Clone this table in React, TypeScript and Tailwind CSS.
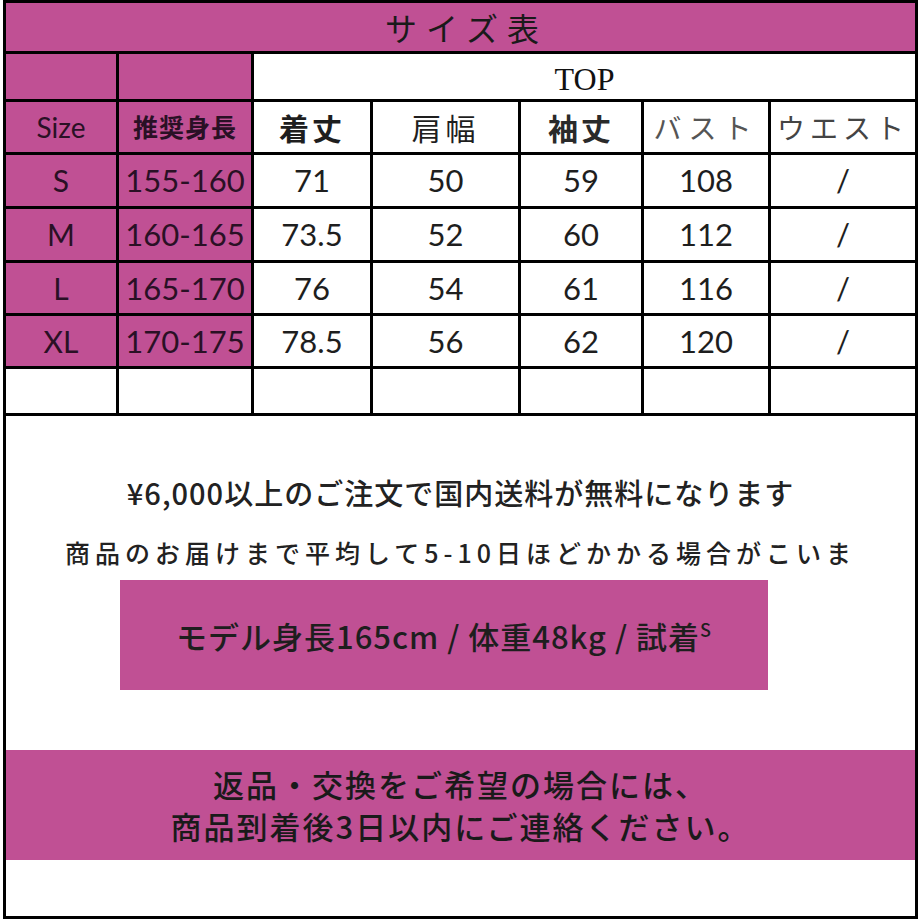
import React from 'react';

const pink = 'bg-[#c05094]';
const num = "font-['Lato','Noto_Sans_CJK_JP',sans-serif] text-[31px] text-[#1e1e1e]";
const jp = "font-['Noto_Sans_CJK_JP',sans-serif]";

const rows = [
  { size: 'S', h: '155-160', v: ['71', '50', '59', '108'], rowH: 'h-[54px]' },
  { size: 'M', h: '160-165', v: ['73.5', '52', '60', '112'], rowH: 'h-[54px]' },
  { size: 'L', h: '165-170', v: ['76', '54', '61', '116'], rowH: 'h-[53px]' },
  { size: 'XL', h: '170-175', v: ['78.5', '56', '62', '120'], rowH: 'h-[53px]' },
];

function Cell({ children, className = '', last = false }: { children?: React.ReactNode; className?: string; last?: boolean }) {
  return (
    <div className={`flex items-center justify-center border-b-[3px] border-black ${last ? '' : 'border-r-[3px]'} ${className}`}>
      {children}
    </div>
  );
}

export default function App() {
  return (
    <div className="w-[920px] h-[920px] bg-white">
      <div className="ml-[3px] w-[915px] h-[919px] border-[3px] border-black flex flex-col">
        {/* title */}
        <div className={`h-[51px] shrink-0 ${pink} border-b-[3px] border-black flex items-center justify-center`}>
          <span className={`${jp} text-[32px] tracking-[9px] pl-[12px] text-[#1a1a1a] leading-none`}>サイズ表</span>
        </div>

        {/* table */}
        <div className="grid grid-cols-[113px_135px_119px_148px_123px_127px_1fr]">
          <Cell className={`h-[48px] ${pink}`} />
          <Cell className={`h-[48px] ${pink}`} />
          <Cell last className="h-[48px] col-span-5">
            <span className="font-['Liberation_Serif',serif] text-[32px] text-[#111] leading-none pt-1">TOP</span>
          </Cell>

          <Cell className={`h-[53px] ${pink}`}>
            <span className="font-['Lato',sans-serif] text-[28px] text-[#2a1025]">Size</span>
          </Cell>
          <Cell className={`h-[53px] ${pink}`}>
            <span className={`${jp} text-[25px] font-bold tracking-[1px] text-[#2a1025]`}>推奨身長</span>
          </Cell>
          <Cell className="h-[53px]">
            <span className={`${jp} text-[30px] font-semibold tracking-[3px] text-[#1e1e1e]`}>着丈</span>
          </Cell>
          <Cell className="h-[53px]">
            <span className={`${jp} text-[30px] tracking-[4px] text-[#1e1e1e]`}>肩幅</span>
          </Cell>
          <Cell className="h-[53px]">
            <span className={`${jp} text-[30px] font-semibold tracking-[3px] text-[#2a2a2a]`}>袖丈</span>
          </Cell>
          <Cell className="h-[53px]">
            <span className={`${jp} text-[28px] tracking-[7px] text-[#555]`}>バスト</span>
          </Cell>
          <Cell last className="h-[53px]">
            <span className={`${jp} text-[28px] tracking-[5px] text-[#444]`}>ウエスト</span>
          </Cell>

          {rows.map((r) => (
            <React.Fragment key={r.size}>
              <Cell className={`${r.rowH} ${pink}`}>
                <span className="font-['Lato',sans-serif] text-[30px] text-[#2a1025]">{r.size}</span>
              </Cell>
              <Cell className={`${r.rowH} ${pink}`}>
                <span className="font-['Lato',sans-serif] text-[31px] text-[#2a1025]">{r.h}</span>
              </Cell>
              {r.v.map((v, i) => (
                <Cell key={i} className={r.rowH}>
                  <span className={num}>{v}</span>
                </Cell>
              ))}
              <Cell last className={r.rowH}>
                <span className={num}>/</span>
              </Cell>
            </React.Fragment>
          ))}

          {[0, 1, 2, 3, 4, 5, 6].map((i) => (
            <Cell key={i} last={i === 6} className="h-[47px]" />
          ))}
        </div>

        {/* notes */}
        <div className="h-[334px] shrink-0 flex flex-col">
          <div className={`mt-[56px] h-[40px] flex items-center justify-center ${jp} text-[29px] font-medium tracking-[1px] text-[#222] leading-none`}>
            ¥6,000以上のご注文で国内送料が無料になります
          </div>
          <div className={`mt-[20px] h-[40px] flex items-center justify-center ${jp} text-[25px] font-medium tracking-[5px] text-[#222] leading-none`}>
            商品のお届けまで平均して5-10日ほどかかる場合がこいま
          </div>
          <div className={`mt-[8px] ml-[114px] w-[648px] h-[110px] ${pink} flex items-center justify-center`}>
            <span className={`${jp} text-[31px] font-medium tracking-[1px] text-[#1e1e1e] leading-none`}>
              モデル身長165cm / 体重48kg / 試着<span className="text-[18px] align-top">S</span>
            </span>
          </div>
        </div>

        <div className={`h-[110px] shrink-0 ${pink} flex flex-col items-center justify-center ${jp} text-[31px] font-medium tracking-[2px] text-[#1a1a1a] leading-[42px]`}>
          <div>返品・交換をご希望の場合には、</div>
          <div>商品到着後3日以内にご連絡ください。</div>
        </div>
        <div className="flex-1" />
      </div>
    </div>
  );
}
